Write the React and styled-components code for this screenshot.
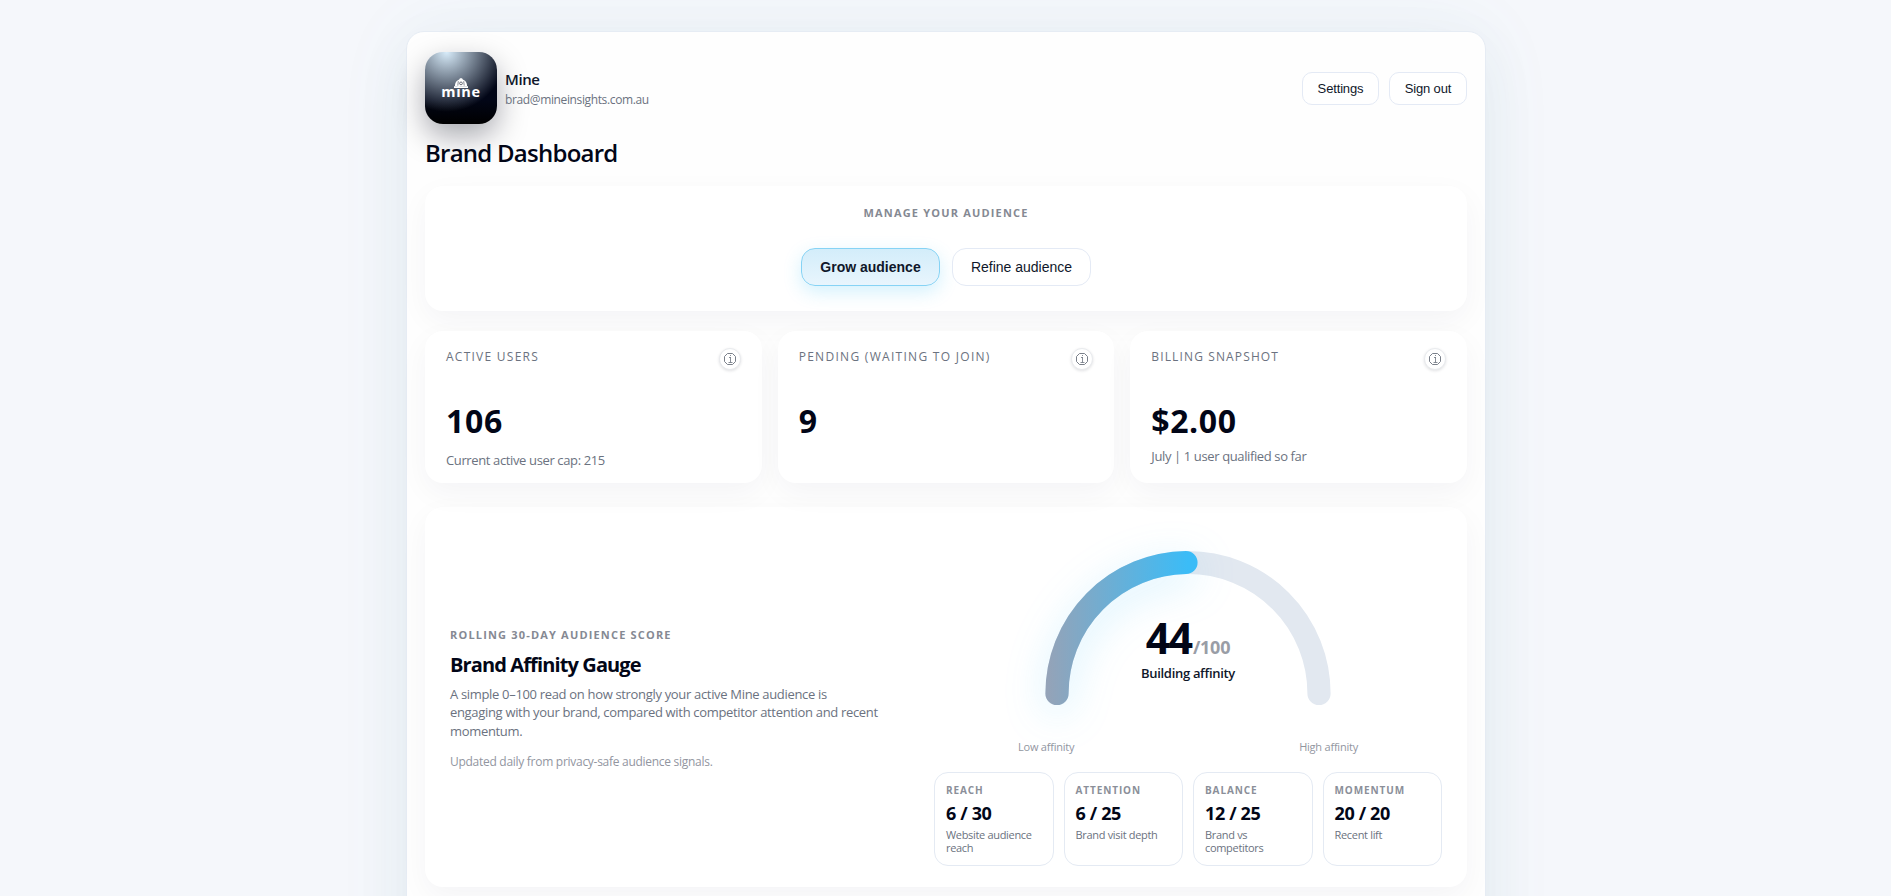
import React from 'react';
import styled, { createGlobalStyle, css } from 'styled-components';

const GlobalStyle = createGlobalStyle`
  *, *::before, *::after { box-sizing: border-box; }
  body {
    margin: 0;
    background: #f5f7fb;
    color: #0f172a;
    font-family: "Open Sans", "Noto Sans", sans-serif;
  }
  h1, h2, p { margin: 0; }
`;

const Page = styled.div`
  height: 100vh;
  overflow: hidden;
  padding: 31.4px 0 0 1px;
`;

const Shell = styled.main`
  width: 1080px;
  min-height: 1100px;
  margin: 0 auto;
  padding: 19.6px 18px 32px;
  background: #fefefe;
  border: 1px solid #e6ecf4;
  border-radius: 18px;
  box-shadow:
    0 18px 60px rgba(15, 70, 80, 0.05),
    0 0 80px rgba(56, 160, 180, 0.06);
`;

const Header = styled.header`
  display: flex;
  align-items: center;
  justify-content: space-between;
`;

const Identity = styled.div`
  display: flex;
  align-items: center;
  gap: 8px;
`;

const Logo = styled.div`
  width: 72px;
  height: 72px;
  display: flex;
  flex-direction: column;
  align-items: center;
  padding-top: 26px;
  border-radius: 18px;
  background:
    radial-gradient(circle at 30% 0%, #d8ecfa 0%, rgba(216, 236, 250, 0) 68%),
    linear-gradient(180deg, #020617 0%, #020617 66%, #000 100%);
  box-shadow: 0 12px 30px rgba(2, 6, 23, 0.34);
`;

const Wordmark = styled.span`
  margin-top: -5px;
  color: #fff;
  font-size: 14.5px;
  font-weight: 700;
  line-height: 16px;
  letter-spacing: 0.7px;
`;

const Owner = styled.div`
  padding-top: 2.4px;
`;

const OwnerName = styled.div`
  font-size: 15px;
  font-weight: 600;
  line-height: 20px;
  letter-spacing: -0.4px;
`;

const OwnerMail = styled.div`
  margin-top: 2px;
  color: #6b7280;
  font-size: 12px;
  line-height: 18px;
  letter-spacing: -0.37px;
`;

const Actions = styled.div`
  display: flex;
  gap: 10px;
  padding-top: 1px;
`;

const buttonBase = css`
  font-family: "Liberation Sans", Arial, sans-serif;
  color: #0f172a;
  background: #fff;
  border: 1px solid #e4eaf5;
  padding: 0;
`;

const SmallButton = styled.button`
  ${buttonBase}
  width: ${({ $w }) => $w}px;
  height: 33px;
  border-radius: 10px;
  font-size: 13px;
  letter-spacing: -0.15px;
`;

const Title = styled.h1`
  margin-top: 12.7px;
  color: #020617;
  font-size: 24px;
  font-weight: 600;
  line-height: 32px;
  letter-spacing: -0.75px;
`;

const Panel = styled.section`
  background: #fff;
  border-radius: 18px;
  box-shadow: 0 10px 30px rgba(15, 23, 60, 0.045);
`;

const AudiencePanel = styled(Panel)`
  height: 125px;
  margin-top: 17.3px;
  padding-top: 18.7px;
  display: flex;
  flex-direction: column;
  align-items: center;
`;

const Eyebrow = styled.div`
  color: #858993;
  font-size: 11px;
  font-weight: 700;
  line-height: 16px;
  letter-spacing: 1.18px;
  text-transform: uppercase;
`;

const Choices = styled.div`
  display: flex;
  gap: 12px;
  margin-top: 27.3px;
`;

const Choice = styled.button`
  ${buttonBase}
  width: 139px;
  height: 38px;
  border-radius: 14px;
  font-size: 14px;
  ${({ $active }) =>
    $active &&
    css`
      font-weight: 700;
      border-color: #86d3f5;
      background: linear-gradient(180deg, #d3edfa, #e8f5fd);
      box-shadow: 0 6px 18px rgba(56, 189, 248, 0.22);
    `}
`;

const Stats = styled.div`
  display: grid;
  grid-template-columns: repeat(3, 1fr);
  gap: 16px;
  margin-top: 20px;
`;

const StatCard = styled(Panel)`
  height: 152px;
  padding: 17px 21px 0;
`;

const StatHead = styled.div`
  display: flex;
  justify-content: space-between;
  height: 22px;
`;

const StatLabel = styled.span`
  color: #6b7280;
  font-size: 12px;
  line-height: 17px;
  letter-spacing: ${({ $ls }) => $ls}px;
  text-transform: uppercase;
`;

const InfoButton = styled.span`
  width: 22px;
  height: 22px;
  display: flex;
  align-items: center;
  justify-content: center;
  color: #6b727d;
  background: #fff;
  border: 1px solid #e9ebee;
  border-radius: 50%;
  box-shadow: 0 1px 3px rgba(15, 23, 42, 0.13);
`;

const StatValue = styled.div`
  margin-top: 31px;
  color: #020617;
  font-size: 32px;
  font-weight: 700;
  line-height: 40px;
  letter-spacing: ${({ $ls }) => $ls}px;
`;

const StatNote = styled.div`
  margin-top: ${({ $top }) => $top}px;
  color: #6b7280;
  font-size: 13px;
  line-height: 20px;
  letter-spacing: ${({ $ls }) => $ls}px;
`;

const GaugePanel = styled(Panel)`
  display: grid;
  grid-template-columns: 1fr 508px;
  column-gap: 54px;
  align-items: center;
  height: 380px;
  margin-top: 24px;
  padding: 21px 25px;
`;

const GaugeCopy = styled.div`
  padding-top: 4px;
`;

const GaugeTitle = styled.h2`
  margin-top: 7.5px;
  color: #020617;
  font-size: 20px;
  font-weight: 700;
  line-height: 28px;
  letter-spacing: -0.88px;
`;

const GaugeText = styled.p`
  margin-top: 6px;
  color: #6b7280;
  font-size: 13px;
  line-height: 18.6px;
  letter-spacing: -0.325px;
`;

const GaugeUpdated = styled.p`
  margin-top: 12px;
  color: #92969f;
  font-size: 12px;
  line-height: 18px;
  letter-spacing: -0.28px;
`;

const GaugeSide = styled.div`
  align-self: start;
  display: flex;
  flex-direction: column;
  align-items: center;
`;

const Dial = styled.div`
  position: relative;
  width: 340px;
  height: 210.7px;

  svg { display: block; overflow: visible; }
`;

const DialReadout = styled.div`
  position: absolute;
  left: 0;
  right: 0;
  top: 86px;
  display: flex;
  flex-direction: column;
  align-items: center;
`;

const Score = styled.div`
  display: flex;
  align-items: baseline;
  color: #020617;
  font-size: 43px;
  font-weight: 700;
  line-height: 48px;
  letter-spacing: -1.8px;

  small {
    margin-left: 1.5px;
    color: #999da6;
    font-size: 18px;
    line-height: 1;
    letter-spacing: -0.25px;
  }
`;

const ScoreLabel = styled.div`
  margin-top: 1px;
  font-size: 13px;
  font-weight: 600;
  line-height: 20px;
  letter-spacing: -0.31px;
`;

const Range = styled.div`
  width: 340px;
  display: flex;
  justify-content: space-between;
  color: #92969f;
  font-size: 11px;
  line-height: 16px;
  letter-spacing: -0.22px;
`;

const Metrics = styled.div`
  width: 508px;
  display: grid;
  grid-template-columns: repeat(4, 1fr);
  gap: 10px;
  margin-top: 17.3px;
`;

const Metric = styled.div`
  height: 94px;
  padding: 10px 11px 0;
  border: 1px solid #e4eaf3;
  border-radius: 14px;
`;

const MetricLabel = styled.div`
  color: #8b8f99;
  font-size: 10px;
  font-weight: 700;
  line-height: 14px;
  letter-spacing: 0.9px;
  text-transform: uppercase;
`;

const MetricValue = styled.div`
  margin-top: 4px;
  color: #020617;
  font-size: 18px;
  font-weight: 700;
  line-height: 24px;
  letter-spacing: -0.35px;
`;

const MetricNote = styled.div`
  margin-top: 3px;
  color: #6b7280;
  font-size: 11px;
  line-height: 13px;
  letter-spacing: -0.32px;
`;

const HelmetIcon = () => (
  <svg width="14" height="11" viewBox="0 0 14 11" fill="none">
    <path d="M.9 7.900C.9 4.600 2.600 2.200 5.200 1.400L6 .3h2l.8 1.100c2.600.8 4.300 3.200 4.300 6.500z" fill="#fff" />
    <path d="M0 8.200h14V10H0z" fill="#fff" />
    <circle cx="7" cy="5.400" r="1.400" stroke="#141a2a" strokeWidth="0.6" />
    <path d="M4.300 3.200 3.800 7.600M9.700 3.200l.5 4.400" stroke="#141a2a" strokeWidth="0.5" />
  </svg>
);

const InfoIcon = () => (
  <svg width="12" height="12" viewBox="0 0 12 12" fill="none" stroke="currentColor" strokeWidth="1">
    <path d="M3.500.5h5l3 3v5l-3 3h-5l-3-3v-5z" strokeLinejoin="round" strokeWidth="0.9" />
    <path d="M5 4.500h1.500M6.500 4v5.500M4.500 9.500h4M6 2.500h1" strokeWidth="0.8" />
  </svg>
);

const stats = [
  { label: 'Active users', ls: 1.25, value: '106', valueLs: 0.7, note: 'Current active user cap: 215', noteLs: -0.37, noteTop: 9 },
  { label: 'Pending (waiting to join)', ls: 1.29, value: '9', valueLs: 0 },
  { label: 'Billing snapshot', ls: 1.13, value: '$2.00', valueLs: 0.6, note: 'July | 1 user qualified so far', noteLs: -0.38, noteTop: 5 },
];

const metrics = [
  { label: 'Reach', value: '6 / 30', note: 'Website audience reach' },
  { label: 'Attention', value: '6 / 25', note: 'Brand visit depth' },
  { label: 'Balance', value: '12 / 25', note: 'Brand vs competitors' },
  { label: 'Momentum', value: '20 / 20', note: 'Recent lift' },
];

const Gauge = () => (
  <svg width="340" height="200" viewBox="0 0 340 200" fill="none" strokeWidth="23.2" strokeLinecap="round">
    <defs>
      <linearGradient id="affinity" gradientUnits="userSpaceOnUse" x1="30" y1="0" x2="170" y2="0">
        <stop offset="0" stopColor="#94a3b8" />
        <stop offset="1" stopColor="#3bbcf7" />
      </linearGradient>
      <filter id="glow" filterUnits="userSpaceOnUse" x="-60" y="-60" width="400" height="340" colorInterpolationFilters="sRGB">
        <feDropShadow dx="0" dy="10" stdDeviation="20" floodColor="#38bdf8" floodOpacity="0.2" />
      </filter>
    </defs>
    <path d="M39 165.500a131 131 0 0 1 262 0" stroke="#e2e8f0" />
    <path d="M39 165.500A131 131 0 0 1 168 34.500" stroke="url(#affinity)" filter="url(#glow)" />
  </svg>
);

export default function App() {
  return (
    <Page>
      <GlobalStyle />
      <Shell>
        <Header>
          <Identity>
            <Logo>
              <HelmetIcon />
              <Wordmark>mine</Wordmark>
            </Logo>
            <Owner>
              <OwnerName>Mine</OwnerName>
              <OwnerMail>brad@mineinsights.com.au</OwnerMail>
            </Owner>
          </Identity>
          <Actions>
            <SmallButton $w={77}>Settings</SmallButton>
            <SmallButton $w={78}>Sign out</SmallButton>
          </Actions>
        </Header>

        <Title>Brand Dashboard</Title>

        <AudiencePanel>
          <Eyebrow>Manage your audience</Eyebrow>
          <Choices>
            <Choice $active>Grow audience</Choice>
            <Choice>Refine audience</Choice>
          </Choices>
        </AudiencePanel>

        <Stats>
          {stats.map((s) => (
            <StatCard key={s.label}>
              <StatHead>
                <StatLabel $ls={s.ls}>{s.label}</StatLabel>
                <InfoButton><InfoIcon /></InfoButton>
              </StatHead>
              <StatValue $ls={s.valueLs}>{s.value}</StatValue>
              {s.note && <StatNote $top={s.noteTop} $ls={s.noteLs}>{s.note}</StatNote>}
            </StatCard>
          ))}
        </Stats>

        <GaugePanel>
          <GaugeCopy>
            <Eyebrow>Rolling 30-day audience score</Eyebrow>
            <GaugeTitle>Brand Affinity Gauge</GaugeTitle>
            <GaugeText>
              A simple 0–100 read on how strongly your active Mine audience is engaging with your
              brand, compared with competitor attention and recent momentum.
            </GaugeText>
            <GaugeUpdated>Updated daily from privacy-safe audience signals.</GaugeUpdated>
          </GaugeCopy>
          <GaugeSide>
            <Dial>
              <Gauge />
              <DialReadout>
                <Score>44<small>/100</small></Score>
                <ScoreLabel>Building affinity</ScoreLabel>
              </DialReadout>
            </Dial>
            <Range>
              <span>Low affinity</span>
              <span>High affinity</span>
            </Range>
            <Metrics>
              {metrics.map((m) => (
                <Metric key={m.label}>
                  <MetricLabel>{m.label}</MetricLabel>
                  <MetricValue>{m.value}</MetricValue>
                  <MetricNote>{m.note}</MetricNote>
                </Metric>
              ))}
            </Metrics>
          </GaugeSide>
        </GaugePanel>
      </Shell>
    </Page>
  );
}
